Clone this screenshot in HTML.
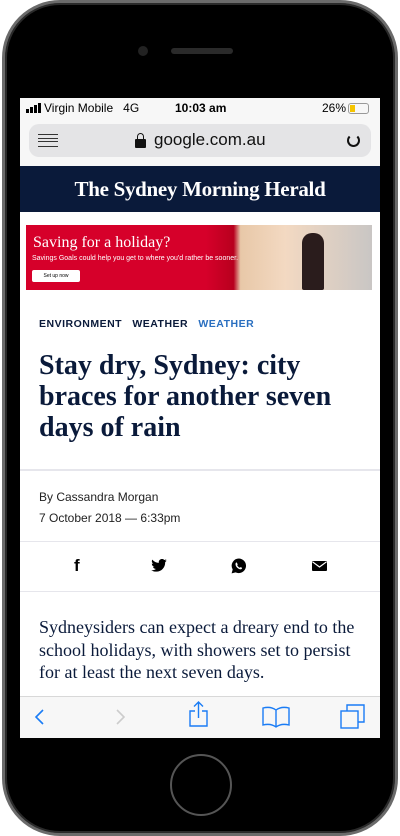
<!DOCTYPE html>
<html><head><meta charset="utf-8"><style>
*{margin:0;padding:0;box-sizing:border-box}
body{width:400px;height:836px;background:#fff;overflow:hidden;position:relative;font-family:"Liberation Sans",sans-serif}
.phone{position:absolute;left:2px;top:0;width:396px;height:836px;border-radius:58px;background:#000;border:3px solid #6b6b6b;box-shadow:inset 0 0 0 2px #2a2a2a}
.screen{position:absolute;left:20px;top:98px;width:360px;height:640px;background:#fff;overflow:hidden}
.status{height:22px;background:#f7f7f7;font-size:12px;color:#000;position:relative}
.url{height:46px;background:#f7f7f7;position:relative}
.urlbox{position:absolute;left:9px;top:4px;width:342px;height:33px;background:#e4e4e6;border-radius:10px}
.mast{height:46px;background:#0a1a3a;color:#fff;text-align:center;font-family:"Liberation Serif",serif;font-weight:bold;font-size:21px;line-height:46px;letter-spacing:-0.3px}
.ad{position:absolute;left:6px;top:127px;width:346px;height:65px;background:linear-gradient(90deg,#d6002a 0,#d6002a 52%,#b8001e 60%,#e8c8a8 62%,#f3d9c2 75%,#c9c6c4 100%)}
.tags{position:absolute;left:19px;top:220px;font-size:10.5px;font-weight:bold;letter-spacing:0.5px;color:#0a1a3a}
h1{position:absolute;left:19px;top:252px;width:330px;font-family:"Liberation Serif",serif;font-weight:bold;font-size:28px;line-height:31px;color:#0a1a3a}
.hr{position:absolute;left:0;width:360px;height:2px;background:#e6e6ec}
.by{position:absolute;left:19px;font-size:12px;color:#222}
.body{position:absolute;left:19px;top:518px;width:322px;font-family:"Liberation Serif",serif;font-size:18px;line-height:22.5px;color:#0a1a3a}
.tb{position:absolute;left:0;top:598px;width:360px;height:42px;background:#f7f7f7;border-top:1px solid #d8d8d8}
</style></head><body>
<div class="phone">
 <div style="position:absolute;left:133px;top:43px;width:10px;height:10px;border-radius:50%;background:#222"></div>
 <div style="position:absolute;left:166px;top:45px;width:62px;height:6px;border-radius:3px;background:#2a2a2a"></div>
 <div style="position:absolute;left:165px;top:751px;width:62px;height:62px;border-radius:50%;border:2px solid #555"></div>
</div>
<div class="screen">
 <div class="status">
  <div style="position:absolute;left:6px;top:5px;width:15px;height:9px">
   <span style="position:absolute;left:0;bottom:-1px;width:3px;height:4px;background:#000"></span>
   <span style="position:absolute;left:4px;bottom:-1px;width:3px;height:6px;background:#000"></span>
   <span style="position:absolute;left:8px;bottom:-1px;width:3px;height:8px;background:#000"></span>
   <span style="position:absolute;left:12px;bottom:-1px;width:3px;height:10px;background:#000"></span>
  </div>
  <span style="position:absolute;left:24px;top:3px">Virgin Mobile&nbsp;&nbsp; 4G</span>
  <span style="position:absolute;left:155px;top:3px;font-weight:bold">10:03 am</span>
  <span style="position:absolute;left:302px;top:3px">26%</span>
  <div style="position:absolute;left:328px;top:5px;width:21px;height:11px;border:1px solid #999;border-radius:3px"><div style="width:5px;height:7px;margin:1px;background:#f5c400"></div></div>
 </div>
 <div class="url"><div class="urlbox">
  <div style="position:absolute;left:9px;top:10px;width:20px;height:13px;border-top:1px solid #333;border-bottom:1px solid #333"><div style="margin-top:3px;height:4px;border-top:1px solid #333;border-bottom:1px solid #333"></div></div>
  <div style="position:absolute;left:106px;top:15px;width:11px;height:9px;background:#111;border-radius:1px"></div>
  <div style="position:absolute;left:108px;top:9px;width:7px;height:8px;border:1.5px solid #111;border-bottom:none;border-radius:4px 4px 0 0"></div>
  <span style="position:absolute;left:125px;top:6px;font-size:17px;color:#111">google.com.au</span>
  <div style="position:absolute;left:318px;top:10px;width:13px;height:13px;border:2px solid #111;border-top-color:transparent;border-radius:50%"></div>
 </div></div>
 <div class="mast">The Sydney Morning Herald</div>
 <div class="ad">
  <div style="position:absolute;left:7px;top:9px;font-family:'Liberation Serif',serif;font-size:16px;color:#fff">Saving for a holiday?</div>
  <div style="position:absolute;left:6px;top:30px;font-size:7px;color:#fff">Savings Goals could help you get to where you'd rather be sooner.</div>
  <div style="position:absolute;left:6px;top:45px;width:48px;height:12px;background:#fff;border-radius:2px;font-size:5px;line-height:12px;text-align:center">Set up now</div>
  <div style="position:absolute;left:276px;top:8px;width:22px;height:57px;background:#2a1c1c;border-radius:10px 10px 2px 2px"></div>
 </div>
 <div class="tags">ENVIRONMENT&nbsp;&nbsp; WEATHER&nbsp;&nbsp; <span style="color:#2a6fc0">WEATHER</span></div>
 <h1>Stay dry, Sydney: city braces for another seven days of rain</h1>
 <div class="hr" style="top:371px"></div>
 <div class="by" style="top:392px">By Cassandra Morgan</div>
 <div class="by" style="top:413px">7 October 2018 — 6:33pm</div>
 <div class="hr" style="top:443px;height:1px"></div>
 <div style="position:absolute;top:458px;left:54px;font-weight:bold;font-size:17px">f</div>
 <svg style="position:absolute;left:131px;top:461px" width="16" height="13" viewBox="0 0 24 20"><path d="M24 2.4a10 10 0 0 1-2.8.8A5 5 0 0 0 23.3.4a10 10 0 0 1-3.1 1.2A4.9 4.9 0 0 0 11.8 6 14 14 0 0 1 1.7.9a4.9 4.9 0 0 0 1.5 6.6 5 5 0 0 1-2.2-.6 4.900 4.900 0 0 0 3.900 4.900 5 5 0 0 1-2.200.1 4.900 4.900 0 0 0 4.600 3.400A9.900 9.900 0 0 1 0 17.300 14 14 0 0 0 7.500 19.500c9.100 0 14-7.500 14-14v-.6A10 10 0 0 0 24 2.400z"/></svg>
 <svg style="position:absolute;left:211px;top:460px" width="16" height="16" viewBox="0 0 16 16"><path d="M8 0.5a7.3 7.3 0 0 0-6.3 11L.6 15.4l4-1A7.3 7.3 0 1 0 8 .5z"/><path d="M5.3 4.5c.3 0 .6 0 .8.6l.6 1.4-.5.8c.6 1.2 1.5 2 2.6 2.5l.7-.7 1.5.7c.3.5-.2 1.4-1 1.5C7.800 11.600 4.500 8.800 4.500 6.200 4.500 5.200 5 4.500 5.300 4.500z" fill="#fff"/></svg>
 <svg style="position:absolute;left:292px;top:463px" width="15" height="10" viewBox="0 0 15 10"><rect width="15" height="10" rx="1"/><path d="M0.5 0.8L7.5 6l7-5.200" stroke="#fff" fill="none" stroke-width="1.2"/></svg>
 <div class="hr" style="top:493px;height:1px"></div>
 <div class="body">Sydneysiders can expect a dreary end to the school holidays, with showers set to persist for at least the next seven days.</div>
 <div class="tb">
  <svg style="position:absolute;left:14px;top:11px" width="12" height="18"><path d="M9 2L2 9l7 7" stroke="#1a7cf5" stroke-width="1.6" fill="none"/></svg>
  <svg style="position:absolute;left:94px;top:11px" width="12" height="18"><path d="M3 2l7 7-7 7" stroke="#ccc" stroke-width="1.6" fill="none"/></svg>
  <svg style="position:absolute;left:168px;top:4px" width="22" height="26" fill="none" stroke="#1a7cf5" stroke-width="1.4"><path d="M7 10H2v15h17V10h-5M10.5 17V1M6 5.5L10.5 1 15 5.5"/></svg>
  <svg style="position:absolute;left:242px;top:9px" width="28" height="22" fill="none" stroke="#1a7cf5" stroke-width="1.4"><path d="M14 4C10 1 5 1 1 2v17c4-1 9-1 13 2 4-3 9-3 13-2V2c-4-1-9-1-13 2zM14 4v17"/></svg>
  <svg style="position:absolute;left:320px;top:7px" width="26" height="26" fill="none" stroke="#1a7cf5" stroke-width="1.4"><rect x="1" y="7" width="17" height="17"/><path d="M7 7V1h17v17h-6"/></svg>
 </div>
</div>
</body></html>
